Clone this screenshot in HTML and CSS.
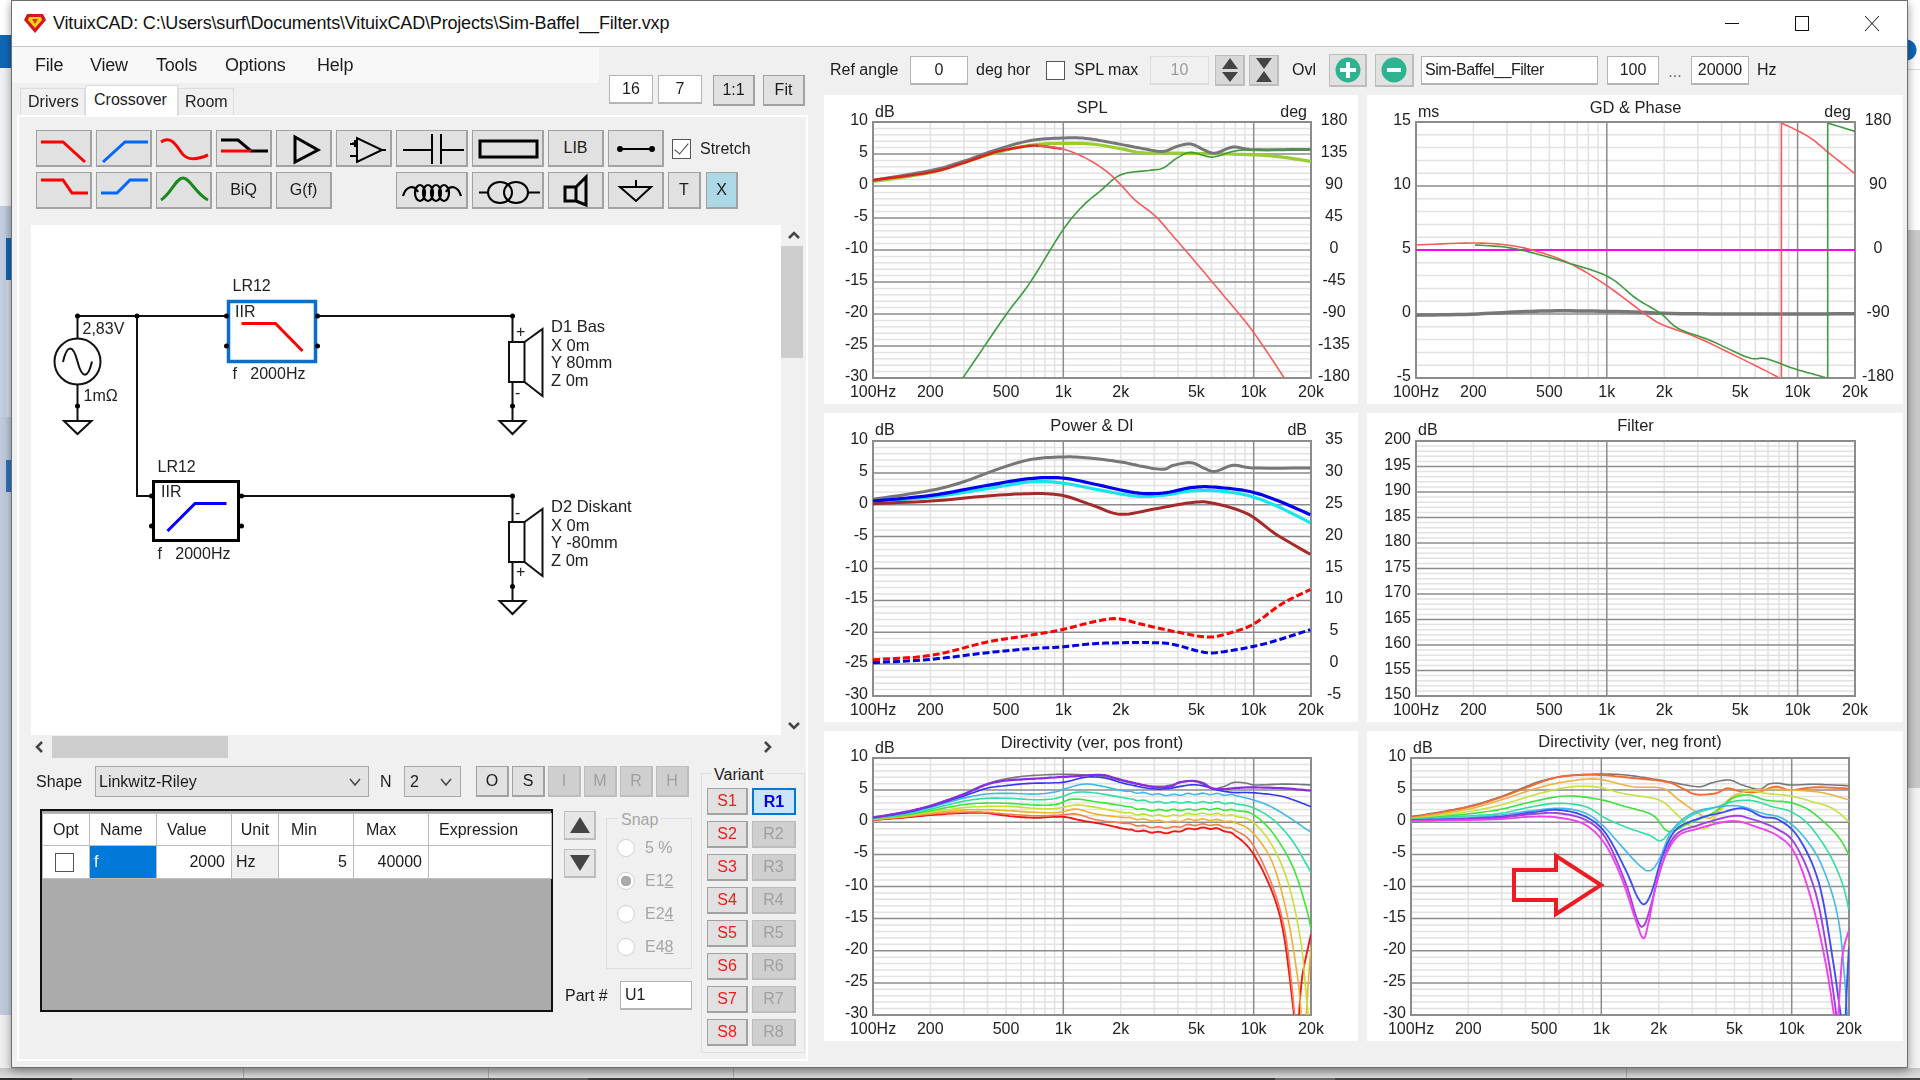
FILE: index.html
```html
<!DOCTYPE html>
<html lang="en">
<head>
<meta charset="utf-8">
<title>VituixCAD</title>
<link rel="stylesheet" href="styles.css">
</head>
<body>
<aside class="desk-left"></aside>
<main class="window">
  <header class="titlebar">
    <svg class="logo" viewBox="0 0 22 19" width="22" height="19"><polygon points="3,0 19,0 22,6 11,19 0,6" fill="#d8141c"/><polygon points="5,3 17,3 18,6 11,14 4,6" fill="#f4d313"/><polygon points="8,5 14,5 11,10" fill="#d8381c"/></svg>
    <span class="title-text">VituixCAD: C:\Users\surf\Documents\VituixCAD\Projects\Sim-Baffel__Filter.vxp</span>
    <div class="win-controls">
      <span class="win-btn"><svg width="14" height="15" viewBox="0 0 14 15"><path d="M0 7.5H14" stroke="#111" fill="none"/></svg></span>
      <span class="win-btn"><svg width="14" height="15" viewBox="0 0 14 15"><rect x=".5" y=".5" width="13" height="14" stroke="#111" fill="none"/></svg></span>
      <span class="win-btn"><svg width="14" height="15" viewBox="0 0 14 15"><path d="M0 0L14 15M14 0L0 15" stroke="#111" fill="none"/></svg></span>
    </div>
  </header>
  <div class="main">
    <section class="left">
      <div class="left-top">
        <div class="left-head">
          <nav class="menubar"><span class="m-file">File</span><span class="m-view">View</span><span class="m-tools">Tools</span><span class="m-options">Options</span><span>Help</span></nav>
          <div class="tabs"><span class="tab tab-drivers">Drivers</span><span class="tab tab-active">Crossover</span><span class="tab tab-room">Room</span></div>
        </div>
        <div class="zoom-tools">
          <span class="field f-zoom">16</span><span class="field f-zoom">7</span>
          <span class="btn b-zoom m-zoom">1:1</span><span class="btn b-zoom">Fit</span>
        </div>
      </div>
      <div class="tab-page">
        <div class="parts">
          <div class="parts-row">
            <span class="btn b-part"><svg viewBox="0 0 56 37"><path d="M5 12H27L49 32" class="i-red"/></svg></span>
            <span class="btn b-part"><svg viewBox="0 0 56 37"><path d="M7 32L29 12H52" class="i-blue"/></svg></span>
            <span class="btn b-part"><svg viewBox="0 0 56 37"><path d="M5 12C14 6 19 13 25 22C30 30 38 31 52 25" class="i-red"/></svg></span>
            <span class="btn b-part"><svg viewBox="0 0 56 37"><path d="M5 10H22L35 21H52" class="i-black"/><path d="M5 21H35" class="i-red"/></svg></span>
            <span class="btn b-part"><svg viewBox="0 0 56 37"><path d="M19 7V32L42 20Z" class="i-black"/></svg></span>
            <span class="btn b-part"><svg viewBox="0 0 56 37"><path d="M21 8V32L46 20ZM14 14H21M14 26H21M46 20H50M19 10V17M16 13.500H22M16 26H22" class="i-thin"/></svg></span>
            <span class="btn b-wide"><svg viewBox="0 0 72 37"><path d="M7 20H36M36 4V34M45 4V34M45 20H68" class="i-thin"/></svg></span>
            <span class="btn b-wide"><svg viewBox="0 0 72 37"><rect x="8" y="11" width="57" height="16" class="i-black"/></svg></span>
            <span class="btn b-part">LIB</span>
            <span class="btn b-part"><svg viewBox="0 0 56 37"><path d="M12 19H44" class="i-thin"/><circle cx="12" cy="19" r="3"/><circle cx="44" cy="19" r="3"/></svg></span>
            <span class="check check-stretch"></span><span class="stretch-label">Stretch</span>
          </div>
          <div class="parts-row">
            <span class="btn b-part"><svg viewBox="0 0 56 37"><path d="M5 8H27L36 21H52" class="i-red"/></svg></span>
            <span class="btn b-part"><svg viewBox="0 0 56 37"><path d="M5 21H21L34 8H52" class="i-blue"/></svg></span>
            <span class="btn b-part"><svg viewBox="0 0 56 37"><path d="M5 28C15 22 20 6 27 6C34 6 40 22 52 28" class="i-green"/></svg></span>
            <span class="btn b-part">BiQ</span>
            <span class="btn b-part">G(f)</span>
            <span class="parts-gap"></span>
            <span class="btn b-wide"><svg viewBox="0 0 72 37"><path d="M7 24C10 14 18 12 22 20M50 20C54 12 62 14 65 24" class="i-coil"/><ellipse cx="24" cy="21" rx="5" ry="8" class="i-coil"/><ellipse cx="32" cy="21" rx="5" ry="8" class="i-coil"/><ellipse cx="40" cy="21" rx="5" ry="8" class="i-coil"/><ellipse cx="48" cy="21" rx="5" ry="8" class="i-coil"/></svg></span>
            <span class="btn b-wide"><svg viewBox="0 0 72 37"><path d="M7 20.500H17M56 20.500H68" class="i-thin"/><ellipse cx="28" cy="20.500" rx="12" ry="10.500" class="i-thin"/><ellipse cx="44" cy="20.500" rx="12" ry="10.500" class="i-thin"/></svg></span>
            <span class="btn b-part"><svg viewBox="0 0 56 37"><path d="M17 15H28V29H17ZM28 15L38 5V33L28 29" class="i-black"/></svg></span>
            <span class="btn b-part"><svg viewBox="0 0 56 37"><path d="M28 8V15M12 15H43L28 29Z" class="i-thin"/></svg></span>
            <span class="btn b-narrow">T</span>
            <span class="btn b-narrow b-x">X</span>
          </div>
        </div>
        <div class="canvas-row">
          <svg class="schematic" width="750" height="510" viewBox="31 225 750 510">
            <g class="wire">
              <path d="M77.500 316H226.500M317.500 316H512.500V342M512.500 382V421M137 316V496H152M241.500 496H512.500V522M512.500 562V601M77.500 316V339M77.500 385V421"/>
              <path d="M64 421H91.500L77.500 434ZM499.500 421H525.500L512.500 434ZM499.500 601H525.500L512.500 614Z"/>
              <circle cx="77.500" cy="361.500" r="23"/>
              <path d="M63 362C67 344 73 344 77.500 361.500C82 379 88 379 92 361.500"/>
              <rect x="509" y="342" width="15.500" height="40"/>
              <path d="M524.500 342L542.500 329V396L524.500 382"/>
              <rect x="509" y="522" width="15.500" height="40"/>
              <path d="M524.500 522L542.500 509V576L524.500 562"/>
            </g>
            <rect x="228.500" y="301.500" width="87" height="60" class="blk-sel"/>
            <rect x="153.500" y="481.500" width="85" height="59" class="blk"/>
            <path d="M241.500 323.500H275.500L302.500 351" class="cv-red"/>
            <path d="M167.500 531L195 503.500H226.500" class="cv-blue"/>
            <g class="dots">
              <circle cx="77.500" cy="316" r="2.500"/><circle cx="137" cy="316" r="2.500"/><circle cx="226.500" cy="316" r="2.500"/><circle cx="317.500" cy="316" r="2.500"/><circle cx="226.500" cy="346" r="2.500"/><circle cx="317.500" cy="346" r="2.500"/><circle cx="512.500" cy="316" r="2.500"/><circle cx="512.500" cy="406" r="2.500"/><circle cx="77.500" cy="406" r="2.500"/><circle cx="151.500" cy="496" r="2.500"/><circle cx="241.500" cy="496" r="2.500"/><circle cx="151.500" cy="526" r="2.500"/><circle cx="241.500" cy="526" r="2.500"/><circle cx="512.500" cy="496" r="2.500"/><circle cx="512.500" cy="586.500" r="2.500"/>
            </g>
            <g class="sch-text">
              <text x="82.500" y="333.500">2,83V</text><text x="83.500" y="401">1mΩ</text>
              <text x="232.500" y="291">LR12</text><text x="235" y="317">IIR</text><text x="232.500" y="378.500">f&#160;&#160;&#160;2000Hz</text>
              <text x="157.500" y="471.500">LR12</text><text x="161" y="497">IIR</text><text x="157.500" y="558.500">f&#160;&#160;&#160;2000Hz</text>
              <text x="516" y="337">+</text><text x="515" y="398">-</text><text x="515" y="518">-</text><text x="516" y="577">+</text>
            </g>
            <g class="sch-text sch-driver">
              <text x="551" y="332">D1 Bas</text><text x="551" y="350.500">X 0m</text><text x="551" y="368">Y 80mm</text><text x="551" y="386">Z 0m</text>
              <text x="551" y="512">D2 Diskant</text><text x="551" y="530.500">X 0m</text><text x="551" y="548">Y -80mm</text><text x="551" y="566">Z 0m</text>
            </g>
          </svg>
          <div class="vscroll">
            <svg class="arrow" width="14" height="10" viewBox="0 0 14 10"><path d="M2 8L7 3L12 8" class="chev"/></svg>
            <div class="vthumb"></div>
            <svg class="arrow arrow-end" width="14" height="10" viewBox="0 0 14 10"><path d="M2 2L7 7L12 2" class="chev"/></svg>
          </div>
        </div>
        <div class="hscroll">
          <svg class="harrow" width="10" height="14" viewBox="0 0 10 14"><path d="M8 2L3 7L8 12" class="chev"/></svg>
          <div class="hthumb"></div>
          <svg class="harrow harrow-end" width="10" height="14" viewBox="0 0 10 14"><path d="M2 2L7 7L2 12" class="chev"/></svg>
        </div>
        <div class="bottom">
          <div class="bottom-main">
            <div class="shape-row">
              <span class="lbl-shape">Shape</span>
              <span class="combo combo-shape">Linkwitz-Riley<svg width="12" height="8" viewBox="0 0 12 8"><path d="M1 1L6 7L11 1" class="chev-thin"/></svg></span>
              <span class="lbl-n">N</span>
              <span class="combo combo-n">2<svg width="12" height="8" viewBox="0 0 12 8"><path d="M1 1L6 7L11 1" class="chev-thin"/></svg></span>
              <span class="btn b-opt b-first">O</span><span class="btn b-opt">S</span><span class="btn b-opt b-off">I</span><span class="btn b-opt b-off">M</span><span class="btn b-opt b-off">R</span><span class="btn b-opt b-off">H</span>
            </div>
            <div class="param-row">
              <div class="grid-box">
                <table class="params">
                  <thead><tr><th class="c-opt">Opt</th><th class="c-name">Name</th><th class="c-val">Value</th><th class="c-unit">Unit</th><th class="c-min">Min</th><th class="c-max">Max</th><th class="c-expr">Expression</th></tr></thead>
                  <tbody><tr><td class="td-c"><span class="check check-grid"></span></td><td class="td-sel">f</td><td class="num">2000</td><td class="td-unit">Hz</td><td class="num">5</td><td class="num">40000</td><td></td></tr></tbody>
                </table>
              </div>
              <div class="move-col">
                <span class="btn b-move"><svg width="22" height="18" viewBox="0 0 22 18"><path d="M11 1L21 17H1Z" fill="#444"/></svg></span>
                <span class="btn b-move"><svg width="22" height="18" viewBox="0 0 22 18"><path d="M1 1H21L11 17Z" fill="#444"/></svg></span>
              </div>
              <div class="snap-col">
                <div class="group snap">
                  <span class="group-title title-off">Snap</span>
                  <div class="radio-row"><span class="radio"></span>5 %</div>
                  <div class="radio-row"><span class="radio radio-on"></span><span>E1<u>2</u></span></div>
                  <div class="radio-row"><span class="radio"></span><span>E2<u>4</u></span></div>
                  <div class="radio-row"><span class="radio"></span><span>E4<u>8</u></span></div>
                </div>
                <div class="part-row"><span class="lbl-part">Part #</span><span class="field f-part">U1</span></div>
              </div>
            </div>
          </div>
          <div class="group variant">
            <span class="group-title">Variant</span>
            <div class="variant-grid">
              <span class="btn b-s">S1</span><span class="btn b-r b-r-on">R1</span>
              <span class="btn b-s">S2</span><span class="btn b-r">R2</span>
              <span class="btn b-s">S3</span><span class="btn b-r">R3</span>
              <span class="btn b-s">S4</span><span class="btn b-r">R4</span>
              <span class="btn b-s">S5</span><span class="btn b-r">R5</span>
              <span class="btn b-s">S6</span><span class="btn b-r">R6</span>
              <span class="btn b-s">S7</span><span class="btn b-r">R7</span>
              <span class="btn b-s">S8</span><span class="btn b-r">R8</span>
            </div>
          </div>
        </div>
      </div>
    </section>
    <section class="right">
      <div class="chart-tools">
        <span class="t-ref">Ref angle</span>
        <span class="field f-ref">0</span>
        <span class="t-deg">deg hor</span>
        <span class="check"></span>
        <span class="t-spl">SPL max</span>
        <span class="field field-off f-max">10</span>
        <span class="btn b-spin b-spin1"><svg width="20" height="26" viewBox="0 0 20 26"><path d="M10 1L18 12H2ZM2 15H18L10 25Z" fill="#444"/></svg></span>
        <span class="btn b-spin b-spin2"><svg width="20" height="26" viewBox="0 0 20 26"><path d="M2 1H18L10 12ZM10 14L18 25H2Z" fill="#444"/></svg></span>
        <span class="t-ovl">Ovl</span>
        <span class="btn b-ovl"><svg width="26" height="26" viewBox="0 0 26 26"><circle cx="13" cy="13" r="12.500" fill="#2eb391"/><path d="M13 5V21M5 13H21" stroke="#fff" stroke-width="4"/></svg></span>
        <span class="btn b-ovl b-ovl2"><svg width="26" height="26" viewBox="0 0 26 26"><circle cx="13" cy="13" r="12.500" fill="#2eb391"/><path d="M6 13H20" stroke="#fff" stroke-width="4"/></svg></span>
        <span class="field f-name">Sim-Baffel__Filter</span>
        <span class="field f-from">100</span>
        <span class="t-dots">...</span>
        <span class="field f-to">20000</span>
        <span class="t-hz">Hz</span>
      </div>
      <div class="charts">
        <figure class="chart" id="c-spl"></figure>
        <figure class="chart" id="c-gd"></figure>
        <figure class="chart" id="c-power"></figure>
        <figure class="chart" id="c-filter"></figure>
        <figure class="chart" id="c-dirpos"></figure>
        <figure class="chart" id="c-dirneg"></figure>
      </div>
    </section>
  </div>
</main>
<aside class="desk-right"></aside>
<footer class="taskbar"><span class="cell c1"></span><span class="cell c2"></span><span class="cell c3"></span><span class="cell c4"></span><span class="cell c5"></span></footer>
<div class="bottom-strip"></div>
<script src="charts.js"></script>
</body>
</html>
```
FILE: styles.css
```css
* { box-sizing: border-box; }
html, body { margin: 0; padding: 0; }
body {
  width: 1920px; height: 1080px; overflow: hidden;
  display: grid;
  grid-template-columns: 11px 1897px 12px;
  grid-template-rows: 1068px 10px 2px;
  background: #f0f0f0;
  font: 16px "Liberation Sans", Arial, sans-serif;
  color: #1c1c1c;
}
svg { display: block; }

/* desktop behind the window */
.desk-left {
  background:
    linear-gradient(to bottom, #fff 0 35px, #0f67b8 35px 68px, #f1f2f6 68px 206px, #c3cfe0 206px 417px, #bfcbdd 417px 1015px, #efefef 1015px) left / 6px 100% no-repeat,
    linear-gradient(to bottom, #fff 0 35px, #0f67b8 35px 68px, #f1f2f6 68px 206px, #b9c6db 206px 238px, #1067b8 238px 280px, #d6dde8 280px 417px, #bfcbdd 417px 460px, #2f74bd 460px 492px, #c9d4e4 492px 1015px, #efefef 1015px);
}
.desk-right {
  background:
    radial-gradient(circle at -2px 50px, #0f67b8 10px, transparent 11px),
    linear-gradient(to bottom, #fff 0 69px, #ddd 69px 70px, #fff 70px 230px, #c9c9c9 230px 788px, #f2f2f2 788px);
}
.taskbar { grid-column: 1 / -1; display: flex; background: linear-gradient(to bottom, #c4c4c4, #dedede); }
.cell { border-right: 1px solid #aaa; height: 100%; }
.c1 { width: 244px; } .c2 { width: 245px; } .c3 { width: 245px; } .c4 { width: 893px; } .c5 { flex: 1; border: 0; }
.bottom-strip {
  grid-column: 1 / -1;
  background: linear-gradient(to right, #2f2f2f 0 72px, #5c5c5c 72px 588px, #3a3a3a 588px 1275px, #6a6a6a 1275px 1335px, #444 1335px);
}

/* window */
.window {
  display: flex; flex-direction: column;
  border: 1px solid #6f6f6f;
  background: #f0f0f0;
  box-shadow: 0 3px 9px rgba(0,0,0,.4);
  filter: blur(.4px);
}
.titlebar {
  flex: none; height: 46px;
  display: flex; align-items: center;
  background: #fff;
  border-bottom: 1px solid #c8c8c8;
}
.logo { margin-left: 12px; }
.title-text { margin-left: 7px; font-size: 18px; letter-spacing: -.17px; color: #111; white-space: nowrap; }
.win-controls { margin-left: auto; display: flex; }
.win-btn { width: 70px; display: flex; justify-content: center; }

.main { flex: 1; display: flex; min-height: 0; }
.left { width: 808px; flex: none; }
.right { flex: 1; min-width: 0; }

/* menu + tabs */
.left-top { display: flex; height: 68px; }
.left-head { width: 587px; }
.menubar {
  height: 36px; display: flex; align-items: center;
  padding-left: 23px; font-size: 18px; letter-spacing: -.2px;
  background: #f8f8f8;
}
.m-file { width: 55px; } .m-view { width: 66px; } .m-tools { width: 69px; } .m-options { width: 92px; }
.tabs { display: flex; align-items: flex-end; height: 32px; padding-left: 8px; }
.tab { display: flex; align-items: center; height: 27px; background: #f0f0f0; border: 1px solid #dcdcdc; border-bottom: 0; }
.tab-drivers { width: 65px; padding-left: 7px; }
.tab-active { width: 93px; height: 31px; padding-left: 8px; background: #fff; margin-bottom: -1px; padding-bottom: 2px; position: relative; }
.tab-room { width: 56px; padding-left: 6px; }

.zoom-tools { display: flex; align-items: flex-start; padding: 28px 0 0 10px; }
.field {
  display: flex; align-items: center; justify-content: center;
  height: 29px; background: #fff;
  border: 1px solid #b4b4b4; border-bottom-width: 2px;
  white-space: nowrap;
}
.f-zoom { width: 44px; margin-right: 5px; }
.btn {
  display: flex; align-items: center; justify-content: center;
  background: #e1e1e1;
  border: 1px solid #a2a2a2; border-width: 1px 2px 2px 1px;
  white-space: nowrap;
}
.btn svg { fill: #000; }
.b-zoom { width: 42px; height: 31px; margin-right: 8px; }
.m-zoom { margin-left: 6px; }

/* tab page */
.tab-page {
  margin-left: 5px; width: 791px; height: 946px;
  border: 2px solid #fff;
  background: #f0f0f0;
  padding: 13px 0 0 12px;
}
.parts { display: flex; flex-direction: column; gap: 5px; padding-left: 5px; }
.parts-row { display: flex; gap: 4px; height: 37px; }
.b-part { width: 56px; height: 37px; }
.b-wide { width: 72px; height: 37px; }
.b-narrow { width: 33px; height: 37px; }
.b-x { background: #add8e6; width: 32px; margin-left: 1px; }
.parts-gap { width: 56px; }
.b-part svg { width: 56px; height: 37px; margin: -1px -2px -2px -1px; flex: none; }
.b-wide svg { width: 72px; height: 37px; margin: -1px -2px -2px -1px; flex: none; }
.i-red, .i-blue, .i-green, .i-black, .i-thin, .i-coil { fill: none; stroke-width: 3; }
.i-red { stroke: #f00; } .i-blue { stroke: #06f; } .i-green { stroke: #198a19; } .i-black { stroke: #000; } .i-thin { stroke: #000; stroke-width: 2; }
.i-coil { stroke: #000; stroke-width: 2.200; }
.check { flex: none; display: block; width: 19px; height: 19px; background: #fff; border: 1.500px solid #555; }
.check-stretch { margin: 9px 0 0 4px; height: 20px; position: relative; }
.check-stretch::after { content: ""; position: absolute; left: 5px; top: 0; width: 6px; height: 13px; border: solid #444; border-width: 0 1.500px 1.500px 0; transform: rotate(40deg); }
.stretch-label { margin: 10px 0 0 5px; }

.canvas-row { display: flex; margin-top: 16px; height: 510px; }
.schematic { background: #fff; flex: none; }
.wire { fill: none; stroke: #111; stroke-width: 2; }
.blk-sel { fill: none; stroke: #0a6fc8; stroke-width: 3.500; }
.blk { fill: none; stroke: #000; stroke-width: 3; }
.cv-red { fill: none; stroke: #f00; stroke-width: 3; }
.cv-blue { fill: none; stroke: #00f; stroke-width: 3; }
.dots circle { fill: #000; }
.sch-text text { font: 16px "Liberation Sans", Arial, sans-serif; fill: #222; }
.sch-driver text { font-size: 16.500px; }
.vscroll { width: 26px; height: 526px; margin-top: -16px; display: flex; flex-direction: column; align-items: center; padding: 21px 0 0; }
.arrow { flex: none; margin-top: 0; }
.arrow-end { margin-top: auto; margin-bottom: 4px; }
.vthumb { width: 22px; height: 112px; margin-top: 6px; background: #cdcdcd; margin-left: -4px; }
.chev { fill: none; stroke: #444; stroke-width: 2.500; }
.chev-thin { fill: none; stroke: #444; stroke-width: 1.500; }
.hscroll { display: flex; align-items: center; height: 25px; padding: 0 0 2px 3px; }
.harrow { flex: none; }
.hthumb { width: 176px; height: 22px; margin-left: 8px; background: #cdcdcd; }
.harrow-end { margin-left: 535px; }

.bottom { display: flex; }
.bottom-main { width: 670px; }
.shape-row { display: flex; align-items: center; margin-top: 6px; height: 31px; padding-left: 5px; }
.lbl-shape { width: 59px; }
.combo {
  display: flex; align-items: center; justify-content: space-between;
  height: 31px; background: #e3e3e3;
  border: 1.500px solid #a8a8a8; padding: 0 7px 0 3px;
}
.combo-shape { width: 274px; }
.lbl-n { width: 35px; padding-left: 11px; }
.combo-n { width: 57px; padding: 0 8px 0 5px; }
.b-opt { width: 33px; height: 31px; margin-left: 3px; }
.b-first { margin-left: 15px; }
.b-off { background: #cfcfcf; color: #9f9f9f; border-color: #bdbdbd; }

.param-row { display: flex; margin-top: 12px; padding-left: 9px; }
.grid-box { width: 513px; height: 203px; background: #ababab; border: 2px solid #111; padding-top: 2px; }
.params { border-collapse: collapse; table-layout: fixed; width: 509px; }
.params th, .params td { height: 32px; background: #fff; border: 1px solid #bcbcbc; font-weight: 400; text-align: left; padding: 0 0 0 10px; white-space: nowrap; }
.params td { height: 33px; }
.c-opt { width: 47px; } .c-name { width: 67px; } .c-val { width: 75px; } .c-unit { width: 47px; text-align: center !important; padding-left: 0 !important; } .c-min { width: 75px; } .c-max { width: 75px; } .c-expr { width: 123px; }
.c-min { padding-left: 12px !important; } .c-max { padding-left: 12px !important; }
.params td.num { text-align: right; padding-right: 6px; padding-left: 0; }
.params td.td-sel { background: #0078d7; color: #fff; padding-left: 4px; }
.params td.td-unit { background: #f0f0f0; padding-left: 4px; }
.params td.td-c { padding: 0 0 0 12px; }
.move-col { margin: 2px 0 0 11px; display: flex; flex-direction: column; gap: 9px; }
.b-move { width: 32px; height: 29px; background: #e6e6e6; border-color: #bdbdbd; }
.snap-col { margin-left: 10px; }
.group { border: 1.500px solid #dedede; position: relative; }
.group-title { display: inline-block; background: #f0f0f0; padding: 0 3px; position: absolute; top: -8px; left: 11px; }
.title-off { color: #a6a6a6; }
.snap { width: 86px; height: 151px; margin-top: 9px; padding-top: 12px; color: #a6a6a6; }
.radio-row { display: flex; align-items: center; height: 33px; padding-left: 10px; gap: 10px; }
.radio { flex: none; width: 18px; height: 18px; border-radius: 50%; background: #fff; border: 1px solid #cfcfcf; }
.radio-on { background: radial-gradient(circle, #aaa 0 5px, #fff 5.500px); }
.part-row { display: flex; align-items: center; margin: 12px 0 0 -41px; }
.lbl-part { width: 55px; }
.f-part { width: 72px; height: 29px; justify-content: flex-start; padding-left: 4px; }

.variant { width: 104px; height: 280px; margin: 13px 0 0 0; padding: 14px 0 0 5px; }
.variant .group-title { top: -8px; left: 9px; }
.variant-grid { display: grid; grid-template-columns: 41px 44px; gap: 6px 4px; grid-auto-rows: 27px; }
.b-s { color: #f01c1c; }
.b-r { background: #cfcfcf; color: #a0a0a0; border-color: #bdbdbd; }
.b-r-on { background: #cce4f7; color: #0000e8; border: 2px solid #0078d7; font-weight: 700; }

/* chart toolbar */
.chart-tools { height: 48px; display: flex; align-items: center; padding: 0 0 2px 10px; }
.t-ref { width: 80px; }
.f-ref { width: 58px; }
.t-deg { width: 78px; padding-left: 8px; }
.t-spl { width: 85px; padding-left: 9px; }
.f-max { width: 59px; }
.field-off { background: #f0f0f0; color: #9a9a9a; border-color: #dcdcdc; }
.b-spin { width: 30px; height: 31px; background: #d8d8d8; border-color: #bdbdbd; }
.b-spin1 { margin-left: 6px; }
.b-spin2 { margin-left: 4px; }
.t-ovl { width: 50px; padding-left: 13px; }
.b-ovl { width: 38px; height: 33px; border-color: #bdbdbd; }
.b-ovl2 { margin-left: 8px; width: 39px; }
.f-name { width: 177px; margin-left: 7px; justify-content: flex-start; padding-left: 3px; letter-spacing: -.45px; }
.f-from { width: 52px; margin-left: 9px; }
.t-dots { width: 32px; text-align: center; color: #666; padding-top: 4px; }
.f-to { width: 58px; }
.t-hz { margin-left: 8px; }

/* charts */
.charts {
  display: grid;
  grid-template-columns: 534px 536px;
  grid-template-rows: 309px 309px 310px;
  gap: 9px;
  padding-left: 4px;
}
.chart { margin: 0; background: #fff; }
.chart svg { width: 100%; height: 100%; }
.chart text { font: 16px "Liberation Sans", Arial, sans-serif; fill: #222; }
.chart text.c-title { font-size: 16.500px; }
.grid-minor { stroke: #e2e2e2; stroke-width: 1.500; fill: none; }
.grid-major { stroke: #8c8c8c; stroke-width: 1.500; fill: none; }
.plot-frame { stroke: #8c8c8c; stroke-width: 2; fill: none; }
.curve { fill: none; stroke-linejoin: round; }
.pointer { fill: none; stroke: #ed1c24; stroke-width: 4; stroke-linejoin: miter; }
```
FILE: charts.js
```js
/* Frequency-response plots. Curves are digitised as "x,y" pairs in each plot's own source box. */
var LOW = 100, HIGH = 20000;
var FREQ_LABELS = [[100, '100Hz'], [200, '200'], [500, '500'], [1000, '1k'], [2000, '2k'], [5000, '5k'], [10000, '10k'], [20000, '20k']];

function range(from, step, count) {
  var out = [];
  for (var i = 0; i < count; i++) out.push(from + step * i);
  return out;
}
function parse(s) {
  return s.trim().split(/\s+/).map(function (p) { return p.split(',').map(Number); });
}
/* Catmull-Rom sampling so the digitised points read as a smooth trace */
function smooth(pts) {
  var out = [];
  for (var i = 0; i < pts.length - 1; i++) {
    var p0 = pts[i - 1] || pts[i], p1 = pts[i], p2 = pts[i + 1], p3 = pts[i + 2] || p2;
    for (var k = 0; k < 8; k++) {
      var t = k / 8, t2 = t * t, t3 = t2 * t, q = [];
      for (var a = 0; a < 2; a++) {
        q[a] = 0.5 * (2 * p1[a] + (p2[a] - p0[a]) * t + (2 * p0[a] - 5 * p1[a] + 4 * p2[a] - p3[a]) * t2 + (3 * p1[a] - p0[a] - 3 * p2[a] + p3[a]) * t3);
      }
      out.push(q);
    }
  }
  out.push(pts[pts.length - 1]);
  return out;
}

function drawChart(id, c) {
  var P = c.plot, S = c.src;
  var fx = function (f) { return P.x + P.w * Math.log(f / LOW) / Math.log(HIGH / LOW); };
  var sx = function (x) { return P.x + (x - S[0]) / (S[2] - S[0]) * P.w; };
  var sy = function (y) { return P.y + (y - S[1]) / (S[3] - S[1]) * P.h; };
  var bottom = P.y + P.h, right = P.x + P.w;
  var h = [];
  var clip = 'clip-' + id;
  h.push('<defs><clipPath id="' + clip + '"><rect x="' + P.x + '" y="' + (P.y - 1) + '" width="' + P.w + '" height="' + (P.h + 2) + '"/></clipPath></defs>');

  /* grid */
  var steps = (c.left.length - 1) * 5, minor = '', major = '';
  for (var i = 0; i <= steps; i++) {
    var y = (P.y + P.h * i / steps).toFixed(1);
    if (i % 5) minor += 'M' + P.x + ' ' + y + 'H' + right;
    else major += 'M' + P.x + ' ' + y + 'H' + right;
  }
  [200, 300, 400, 500, 600, 700, 800, 900, 2000, 3000, 4000, 5000, 6000, 7000, 8000, 9000].forEach(function (f) {
    minor += 'M' + fx(f).toFixed(1) + ' ' + P.y + 'V' + bottom;
  });
  [1000, 10000].forEach(function (f) { major += 'M' + fx(f).toFixed(1) + ' ' + P.y + 'V' + bottom; });
  h.push('<path class="grid-minor" d="' + minor + '"/><path class="grid-major" d="' + major + '"/>');
  h.push('<rect class="plot-frame" x="' + P.x + '" y="' + P.y + '" width="' + P.w + '" height="' + P.h + '"/>');

  /* traces */
  h.push('<g clip-path="url(#' + clip + ')">');
  c.curves.forEach(function (cv) {
    var pts = parse(cv.d), line = cv.raw ? pts : smooth(pts);
    var d = line.map(function (p, n) {
      var ry = p[1];
      if (c.ripple && cv.ripple && p[0] > c.ripple[0] && p[0] < c.ripple[1]) ry += c.ripple[2] * Math.sin(p[0] / c.ripple[3]);
      return (n ? 'L' : 'M') + sx(p[0]).toFixed(1) + ' ' + sy(ry).toFixed(1);
    }).join('');
    h.push('<path class="curve" d="' + d + '" stroke="' + cv.c + '" stroke-width="' + (cv.w || 1.6) + '"' + (cv.dash ? ' stroke-dasharray="' + cv.dash + '"' : '') + '/>');
  });
  h.push('</g>');

  /* labels */
  function text(x, y, s, anchor, cls) {
    h.push('<text x="' + x + '" y="' + y + '"' + (anchor ? ' text-anchor="' + anchor + '"' : '') + (cls ? ' class="' + cls + '"' : '') + '>' + s + '</text>');
  }
  text(P.x + P.w / 2, c.titleY || 18, c.title, 'middle', 'c-title');
  text(P.x + 2, 22, c.unitL);
  if (c.unitR) text(right - 4, 22, c.unitR, 'end');
  c.left.forEach(function (v, i) {
    text(P.x - 5, (P.y + P.h * i / (c.left.length - 1) + 3).toFixed(1), v, 'end');
  });
  (c.rightTicks || []).forEach(function (v, i) {
    text(right + 23, (P.y + P.h * i / (c.rightTicks.length - 1) + 3).toFixed(1), v, 'middle');
  });
  FREQ_LABELS.forEach(function (l) { text(fx(l[0]).toFixed(1), P.y + P.h + 19, l[1], 'middle'); });

  if (c.overlay) h.push(c.overlay);
  document.getElementById(id).innerHTML = '<svg viewBox="0 0 ' + c.size[0] + ' ' + c.size[1] + '">' + h.join('') + '</svg>';
}

var GRAY = '#777777';
var dbTicks = range(10, -5, 9);

drawChart('c-spl', {
  size: [534, 309], plot: { x: 49, y: 27, w: 438, h: 256 }, src: [77, 367, 701, 1133],
  title: 'SPL', unitL: 'dB', unitR: 'deg', left: dbTicks,
  rightTicks: range(180, -45, 9),
  curves: [
    { c: '#9acd32', w: 3.2, d: '77,545 160,518 205,490 250,460 300,437 346,431 390,433 430,447 460,459 500,460 560,462 617,465 660,472 701,485' },
    { c: GRAY, w: 3, d: '77,541 160,512 205,485 250,452 300,423 346,415 380,416 420,430 460,446 490,455 510,440 530,433 550,452 565,460 590,442 620,450 700,449' },
    { c: '#3f9a3f', w: 1.6, d: '205,1133 266,945 300,850 346,695 375,620 400,575 430,525 470,512 490,505 510,475 530,458 560,472 590,455 617,450 701,449' },
    { c: '#e02020', w: 2.4, d: '77,541 160,517 205,490 250,458 290,441 312,438 346,447' },
    { c: '#f55d5d', w: 1.6, d: '312,438 346,447 380,475 410,515 430,555 450,600 480,650 505,710 530,770 570,870 617,990 663,1133' }
  ]
});

drawChart('c-gd', {
  size: [536, 309], plot: { x: 49, y: 27, w: 439, h: 256 }, src: [851, 367, 1477, 1133],
  title: 'GD &amp; Phase', unitL: 'ms', unitR: 'deg', left: [15, 10, 5, 0, -5],
  rightTicks: [180, 90, 0, -90, -180],
  curves: [
    { c: GRAY, w: 3.5, d: '851,945 930,942 1000,935 1060,932 1150,935 1250,941 1477,941' },
    { c: '#ff00ff', w: 2, raw: true, d: '851,750 1477,750' },
    { c: '#f45a5a', d: '851,735 930,729 980,735 1020,752 1070,790 1122,855 1180,945 1204,975 1250,1010 1310,1070 1367,1130' },
    { c: '#f45a5a', raw: true, d: '1372,1133 1372,370' },
    { c: '#f45a5a', d: '1372,370 1410,410 1440,460 1477,522' },
    { c: '#3f9a3f', d: '935,735 980,742 1020,760 1070,790 1125,830 1165,895 1200,940 1225,985 1270,1020 1325,1072 1350,1075 1390,1105 1434,1131' },
    { c: '#3f9a3f', raw: true, d: '1438,1133 1438,370' },
    { c: '#3f9a3f', raw: true, d: '1438,370 1477,395' }
  ]
});

drawChart('c-power', {
  size: [534, 309], plot: { x: 49, y: 28, w: 438, h: 255 }, src: [77, 122, 701, 887],
  title: 'Power &amp; DI', unitL: 'dB', unitR: 'dB', left: dbTicks,
  rightTicks: range(35, -5, 9),
  curves: [
    { c: GRAY, w: 3, d: '77,297 160,270 205,245 250,210 300,178 346,170 380,172 430,185 460,198 490,207 505,195 530,187 550,205 565,213 590,195 620,203 700,203' },
    { c: '#15e6ee', w: 3.2, d: '77,304 160,290 240,265 300,245 346,248 390,265 450,287 490,285 530,272 570,272 610,285 650,315 700,367' },
    { c: '#0000f0', w: 3.2, d: '77,302 160,285 240,255 300,235 346,233 390,250 450,277 490,278 530,262 560,260 610,272 650,298 700,343' },
    { c: '#a52a2a', w: 3, d: '77,310 160,302 240,287 300,280 346,285 390,315 430,342 480,325 530,307 560,308 610,340 650,400 700,462' },
    { c: '#f00', w: 3, dash: '7 3', d: '77,778 160,765 240,725 300,705 346,688 390,665 425,655 460,672 510,695 555,710 590,695 620,670 660,610 700,568' },
    { c: '#0000e0', w: 3, dash: '7 3', d: '77,787 160,777 240,757 300,745 346,740 400,729 480,727 510,735 540,752 565,757 620,738 660,715 700,688' }
  ]
});

drawChart('c-filter', {
  size: [536, 309], plot: { x: 49, y: 28, w: 439, h: 255 }, src: [0, 0, 1, 1],
  title: 'Filter', unitL: 'dB', left: range(200, -5, 11), curves: []
});

drawChart('c-dirpos', {
  size: [534, 310], plot: { x: 49, y: 27, w: 438, h: 257 }, src: [10, 27, 1326, 797],
  title: 'Directivity (ver, pos front)', titleY: 17, unitL: 'dB', left: dbTicks, ripple: [780, 1100, 2.4, 7],
  curves: [
    { c: '#777', d: '10,205 100,190 183,170 280,135 350,105 407,90 480,80 578,76 650,78 700,82 755,95 820,108 870,112 905,108 960,95 1000,100 1030,118 1065,112 1095,100 1130,102 1160,108 1250,105 1326,108' },
    { c: '#f01818', w: 1.9, ripple: 1, d: '10,213 100,206 183,198 280,192 350,192 430,202 500,206 578,203 640,215 700,225 770,240 840,248 905,250 960,240 1030,238 1090,255 1150,310 1210,430 1245,560 1275,797' },
    { c: '#f01818', w: 1.9, d: '1290,797 1300,680 1326,555' },
    { c: '#f47a50', ripple: 1, d: '10,212 100,204 183,195 280,189 350,190 420,196 500,200 570,198 620,195 680,212 760,222 840,233 910,235 960,228 1040,228 1100,245 1150,285 1210,410 1250,560 1277,797' },
    { c: '#f0b030', ripple: 1, d: '10,211 100,203 183,192 280,183 350,182 420,185 500,190 570,190 620,180 680,195 760,205 840,213 910,218 960,212 1040,213 1100,222 1150,250 1210,340 1255,500 1285,680 1297,797' },
    { c: '#f0b030', d: '1312,797 1318,700 1326,590' },
    { c: '#c8e030', ripple: 1, d: '10,210 100,201 183,189 280,176 350,172 420,172 500,178 560,178 620,168 680,175 760,190 840,198 910,200 960,195 1040,195 1100,202 1150,218 1210,290 1260,410 1296,580 1310,720 1318,797' },
    { c: '#38e838', ripple: 1, d: '10,209 100,199 183,185 280,167 350,162 420,163 500,168 560,166 610,150 680,158 760,170 830,182 900,183 960,182 1040,180 1100,185 1150,195 1210,250 1270,350 1310,470 1326,540' },
    { c: '#30e0a0', ripple: 1, d: '10,208 100,197 183,180 280,157 350,148 420,148 500,152 560,148 620,130 680,132 740,142 820,155 880,160 960,160 1040,160 1100,165 1150,175 1210,210 1270,275 1326,370' },
    { c: '#40b8e8', ripple: 1, d: '10,207 100,194 183,175 280,148 350,135 420,133 500,135 560,128 600,115 650,105 700,112 760,125 820,132 900,138 960,135 1040,135 1100,140 1150,152 1200,170 1260,205 1326,250' },
    { c: '#3434f4', d: '10,206 100,192 183,172 280,142 350,118 407,110 480,103 578,100 640,86 680,84 720,90 760,102 820,115 860,120 900,118 960,108 1000,110 1040,122 1090,130 1150,131 1230,140 1280,155 1326,173' },
    { c: '#8a2be2', w: 2.2, d: '10,205 100,190 183,170 280,137 350,107 407,95 480,90 578,84 640,80 700,78 740,88 800,103 860,115 905,112 930,100 970,96 1000,103 1030,118 1065,120 1100,117 1150,115 1250,118 1326,125' }
  ]
});

drawChart('c-dirneg', {
  size: [536, 310], plot: { x: 44, y: 27, w: 438, h: 257 }, src: [36, 24, 1350, 795],
  title: 'Directivity (ver, neg front)', titleY: 16, unitL: 'dB', left: dbTicks,
  curves: [
    { c: '#777', d: '36,200 100,190 205,170 305,140 380,110 430,92 500,78 600,72 680,75 750,85 810,95 860,105 905,110 940,98 990,90 1030,105 1080,118 1110,102 1140,100 1175,105 1250,103 1350,107' },
    { c: '#f46a30', w: 1.9, d: '36,203 205,172 305,142 430,95 500,78 600,75 680,82 800,95 850,115 890,133 950,130 985,115 1030,125 1080,125 1130,110 1175,120 1250,112 1350,116' },
    { c: '#f0b040', d: '36,205 205,178 305,150 430,110 520,92 600,88 700,110 790,115 840,150 890,185 930,205 960,180 1000,140 1050,122 1110,118 1175,120 1250,125 1300,135 1350,150' },
    { c: '#c8e040', d: '36,207 205,185 305,165 430,128 520,110 600,112 670,130 780,150 830,190 870,225 920,235 945,205 1000,145 1050,122 1100,130 1175,138 1240,155 1300,175 1350,215' },
    { c: '#40e040', d: '36,208 205,192 305,178 400,155 500,138 600,148 680,170 760,195 800,240 830,240 870,220 940,190 1000,145 1050,135 1100,150 1175,158 1230,180 1290,230 1325,270 1350,315' },
    { c: '#30e0a0', d: '36,209 205,198 305,190 400,170 480,160 560,170 620,205 690,235 750,255 785,272 820,240 880,195 950,172 1000,155 1060,152 1120,170 1175,185 1230,225 1290,310 1330,400 1350,480' },
    { c: '#40b8e8', d: '36,210 205,203 305,195 400,182 490,175 560,190 610,225 660,280 720,345 752,362 780,330 820,240 880,190 950,172 1020,168 1090,190 1150,205 1210,255 1270,350 1320,520 1345,795' },
    { c: '#4050f0', w: 1.9, d: '36,211 205,206 305,200 400,187 480,180 560,200 620,250 680,360 715,440 737,462 760,420 790,320 830,240 900,205 960,190 1030,175 1090,200 1140,210 1200,265 1260,400 1300,620 1325,795' },
    { c: '#4050f0', w: 1.9, d: '1340,795 1345,680 1350,590' },
    { c: '#a040e0', w: 1.9, d: '36,212 205,208 305,203 400,192 480,190 560,210 620,265 680,400 715,510 733,528 752,480 790,340 830,255 900,225 1000,198 1050,205 1130,235 1190,285 1250,430 1290,640 1312,795' },
    { c: '#f040f0', w: 1.9, d: '36,213 205,210 305,207 400,200 480,203 560,225 620,285 670,390 710,510 733,565 748,520 780,370 830,265 900,235 1000,213 1070,230 1140,260 1190,315 1240,460 1280,640 1305,795' },
    { c: '#f040f0', w: 1.9, d: '1318,795 1330,620 1350,540' }
  ],
  overlay: '<path class="pointer" d="M147 139H189V125L234 154L189 183V169H147Z"/>'
});
```
